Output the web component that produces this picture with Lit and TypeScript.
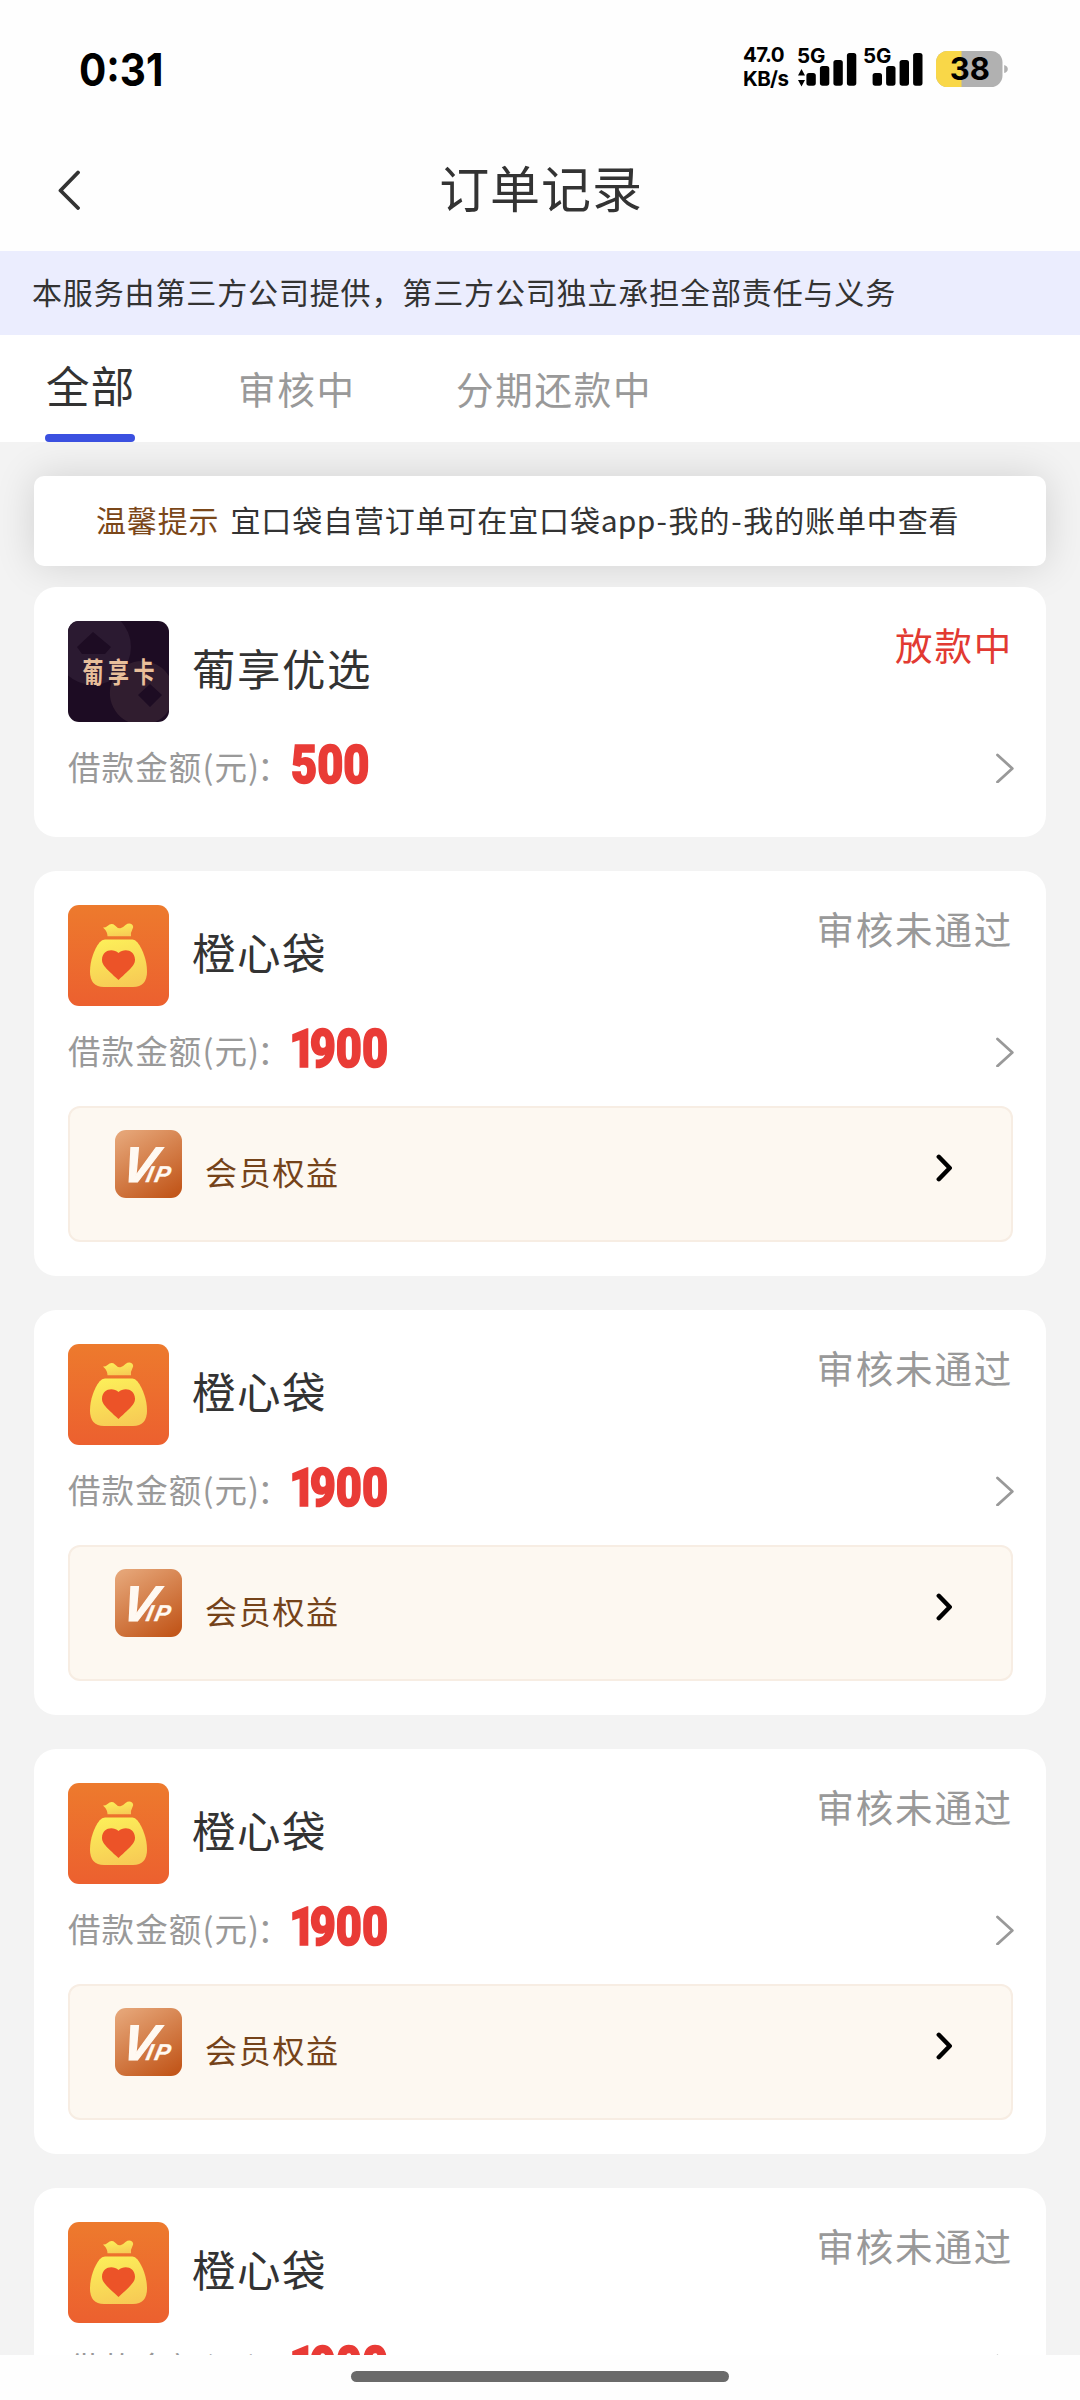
import { LitElement, html, svg, css, nothing } from "lit";
import { customElement, property } from "lit/decorators.js";

interface Order {
  brand: "grape" | "bag";
  name: string;
  amount: string;
  status: string;
  active: boolean;
  vip: boolean;
}

const rejected: Order = {
  brand: "bag",
  name: "橙心袋",
  amount: "1900",
  status: "审核未通过",
  active: false,
  vip: true,
};

const orders: Order[] = [
  { brand: "grape", name: "葡享优选", amount: "500", status: "放款中", active: true, vip: false },
  rejected,
  rejected,
  rejected,
  rejected,
];

@customElement("brand-logo")
export class BrandLogo extends LitElement {
  @property() brand: Order["brand"] = "bag";

  static styles = css`
    :host { display: block; width: 101px; height: 101px; border-radius: 11px; overflow: hidden; }
    svg { display: block; }
    .word { font: 700 21px "Noto Sans CJK SC", sans-serif; fill: #e8bf9b; }
  `;

  private grape() {
    return svg`
      <rect width="101" height="101" fill="#1d0c23"/>
      <path fill="#2b1a31" fill-rule="evenodd" d="M25-12a38 38 0 1 1 0 76a38 38 0 1 1 0-76zM25 11L9 26l5 7h23l6-7z"/>
      <path fill="#301d2f" fill-rule="evenodd" d="M85 42a32 32 0 1 0 0 60a32 32 0 0 0 0-60zM82 63L70 74l12 12l12-12z"/>
      <text class="word" transform="translate(14.5 62) scale(1 1.35)" x="0 25.5 51">葡享卡</text>`;
  }

  private bag() {
    return svg`
      <defs>
        <linearGradient id="bg" x1="0" y1="0" x2="0" y2="1">
          <stop offset="0" stop-color="#ed7a2d"/><stop offset="1" stop-color="#ec602f"/>
        </linearGradient>
        <linearGradient id="gold" x1="0.3" y1="0" x2="0.6" y2="1">
          <stop offset="0" stop-color="#fcee59"/><stop offset="1" stop-color="#f7cb55"/>
        </linearGradient>
      </defs>
      <rect width="101" height="101" fill="url(#bg)"/>
      <path fill="url(#gold)" d="M35 22.500Q37 23 39.500 21Q43.500 17.500 47 20.500Q50 24 53 23Q55 22.500 57.500 20Q61 17.500 64 19.500Q66 21.500 64.500 24Q62.500 27.500 63 31.300H39.500Q39.500 26.500 35 22.500z"/>
      <path fill="url(#gold)" d="M37 34.500H64.500Q67 34.500 69.500 37.500C75 44.500 79 56 79 66.500Q79 82 65 82H36Q22 82 22 66.500C22 56 26 44.500 31.500 37.500Q34 34.500 37 34.500z"/>
      <path fill="#ec5328" d="M50.500 48C45 43 34.500 44.500 34 54.500C34 60 37.500 63 50.500 75C63.500 63 67 60 67 54.500C66.500 44.500 56 43 50.500 48z"/>`;
  }

  render() {
    return html`<svg width="101" height="101" viewBox="0 0 101 101">
      ${this.brand === "grape" ? this.grape() : this.bag()}
    </svg>`;
  }
}

@customElement("order-card")
export class OrderCard extends LitElement {
  @property({ attribute: false }) order!: Order;

  static styles = css`
    :host { display: block; flex: none; }
    .card {
      box-sizing: border-box; display: flex; flex-direction: column;
      height: 250px; padding: 34px 33px 34px 34px; border-radius: 22px; background: #fff;
    }
    .card.tall { height: 405px; }
    .head { display: flex; height: 101px; }
    .name {
      flex: 1; padding: 23px 0 0 23px; line-height: 48px;
      font-size: 43.500px; letter-spacing: 1.500px; color: #333;
    }
    .status { line-height: 44px; padding-top: 1px; font-size: 37.500px; letter-spacing: 1.800px; color: #999; }
    .status.active { color: #e23a32; }
    .money { display: flex; align-items: center; height: 48px; margin-top: 18px; margin-bottom: 1px; }
    .label { width: 223px; font-size: 32.500px; letter-spacing: 1.100px; line-height: 48px; padding-top: 3px; color: #999; white-space: nowrap; }
    .colon { margin-left: -3px; }
    .amount {
      flex: 1; padding-top: 2px; font: 900 54px/48px Roboto, sans-serif; color: #e93b36;
      -webkit-text-stroke: 1.600px #e93b36;
      transform: scaleX(0.835); transform-origin: 0 50%;
    }
    .lead { margin-right: -7px; margin-left: -2px; }
    .go { width: 18px; height: 30px; margin: 7px -1px 0 0; }
    .vip {
      box-sizing: border-box; display: flex; align-items: flex-start;
      height: 136px; margin-top: 33px; padding: 22px 59px 0 45px;
      border: 2px solid #f7ede3; border-radius: 12px; background: #fdf8f1;
    }
    .badge { width: 67px; height: 68px; }
    .mark { font: italic 700 50px "Liberation Sans", sans-serif; fill: #fff9f2; stroke: #fff9f2; stroke-width: 1.200px; }
    .small { font-size: 23px; stroke-width: 0.300px; }
    .perk { flex: 1; padding: 19px 0 0 23px; font-size: 32px; line-height: 44px; letter-spacing: 1.700px; color: #75431a; }
    .more { width: 16px; height: 28px; margin-top: 24px; }
  `;

  private vipBar() {
    return html`<div class="vip">
      <svg class="badge" viewBox="0 0 67 68">
        <defs>
          <linearGradient id="copper" x1="0.2" y1="0" x2="0.8" y2="1">
            <stop offset="0" stop-color="#e5a476"/><stop offset="1" stop-color="#c2571b"/>
          </linearGradient>
        </defs>
        <rect width="67" height="68" rx="11" fill="url(#copper)"/>
        <text class="mark" transform="translate(4.500 51.500) skewX(-12)" x="0" y="0">V<tspan class="small" x="25.500 34">IP</tspan></text>
      </svg>
      <div class="perk">会员权益</div>
      <svg class="more" viewBox="0 0 16 28" fill="none" stroke="#000" stroke-width="4.500" stroke-linecap="round" stroke-linejoin="round">
        <path d="M2.800 2.800L13.700 14L2.800 25.200"/>
      </svg>
    </div>`;
  }

  private amount(value: string) {
    return value.startsWith("1") ? html`<span class="lead">1</span>${value.slice(1)}` : value;
  }

  render() {
    const o = this.order;
    return html`<div class="card ${o.vip ? "tall" : ""}">
      <div class="head">
        <brand-logo .brand=${o.brand}></brand-logo>
        <div class="name">${o.name}</div>
        <div class="status ${o.active ? "active" : ""}">${o.status}</div>
      </div>
      <div class="money">
        <div class="label">借款金额(元)<span class="colon">：</span></div>
        <div class="amount">${this.amount(o.amount)}</div>
        <svg class="go" viewBox="0 0 18 30" fill="none" stroke="#999" stroke-width="2.800" stroke-linecap="round" stroke-linejoin="round">
          <path d="M1.500 2L16.300 15.500L1.500 29"/>
        </svg>
      </div>
      ${o.vip ? this.vipBar() : nothing}
    </div>`;
  }
}

@customElement("app-root")
export class AppRoot extends LitElement {
  static styles = css`
    :host {
      display: flex; flex-direction: column; width: 1080px; height: 2400px; overflow: hidden;
      background: #fefefe; color: #333;
      font-family: "Noto Sans CJK SC", "Noto Sans", sans-serif;
    }
    .statusbar { flex: none; box-sizing: border-box; display: flex; height: 128px; padding: 0 72px 0 79px; }
    .time { flex: 1; padding-top: 43px; font: 650 45px/54px Inter, sans-serif; color: #000; }
    .clock { display: inline-block; transform: scaleX(0.9); transform-origin: 0 50%; }
    .speed { width: 54px; padding-top: 43px; font: 700 20.500px/24px Inter, sans-serif; letter-spacing: -0.600px; color: #000; }
    .signals { width: 139px; height: 128px; }
    .g { font: 650 20.500px Inter, sans-serif; fill: #000; }
    .battery { width: 72px; height: 128px; }
    .level { font: 700 31px Inter, sans-serif; fill: #000; }
    .titlebar { flex: none; display: flex; align-items: center; height: 123px; padding: 0 58px; }
    .back { width: 22px; height: 40px; }
    .title { flex: 1; margin-right: 20px; text-align: center; font-size: 50px; letter-spacing: 0.900px; line-height: 60px; padding-bottom: 7px; }
    .notice { flex: none; height: 84px; padding-left: 32px; background: #ebedfe; font-size: 30px; letter-spacing: 0.860px; line-height: 81px; color: #333; white-space: nowrap; }
    .tabs { flex: none; display: flex; height: 107px; background: #fff; padding-left: 45px; position: relative; z-index: 1; }
    .tab { font-size: 37.500px; letter-spacing: 1.800px; color: #999; line-height: 106px; }
    .tab.second { margin: 0 100px 0 103px; }
    .tab.on { box-sizing: border-box; width: 90px; padding-left: 1px; font-size: 43.500px; letter-spacing: 1.300px; line-height: 99px; color: #333; display: flex; flex-direction: column; white-space: nowrap; }
    .line { height: 8px; margin-left: -1px; border-radius: 4px; background: #3b50e0; }
    .list {
      flex: none; box-sizing: border-box; height: 1913px; padding: 34px 34px 0; overflow: hidden;
      display: flex; flex-direction: column; gap: 34px; background: #f3f3f3;
    }
    .tip {
      flex: none; box-sizing: border-box; height: 90px; margin-bottom: -13px; padding-left: 62px; border-radius: 10px;
      background: #fff; box-shadow: 0 0 40px rgba(0, 0, 0, 0.14);
      font-size: 30px; letter-spacing: 0.860px; line-height: 87px; white-space: nowrap;
    }
    .warm { color: #7b4719; margin-right: 11px; }
    .dash { margin: 0 0.900px; }
    .app { letter-spacing: 0.200px; }
    order-card { position: relative; }
    .foot { flex: 1; display: flex; justify-content: center; padding-top: 16px; }
    .home { width: 378px; height: 11px; border-radius: 6px; background: #6a6a6a; }
  `;

  private bars(x: number) {
    return [0, 1, 2, 3].map((i) => {
      const top = [73, 66, 60, 53][i];
      return svg`<rect x=${x + i * 13.5} y=${top} width="9.400" height=${85.7 - top} rx="2.600"/>`;
    });
  }

  render() {
    return html`
      <div class="statusbar">
        <div class="time"><span class="clock">0:31</span></div>
        <div class="speed"><div>47.0</div><div>KB/s</div></div>
        <svg class="signals" viewBox="0 0 139 128">
          <text class="g" x="0" y="63.200">5G</text>
          <path d="M4.500 69L8 75.500H1zM4.500 86.500L8 80H1z"/>
          ${this.bars(9.4)}
          <text class="g" x="66" y="63.200">5G</text>
          ${this.bars(75.6)}
        </svg>
        <svg class="battery" viewBox="936 0 72 128">
          <defs><clipPath id="cell"><rect x="936" y="51" width="66.500" height="36" rx="11.500"/></clipPath></defs>
          <g clip-path="url(#cell)">
            <rect x="936" y="51" width="67" height="36" fill="#b1b1b1"/>
            <rect x="936" y="51" width="25.500" height="36" fill="#f9d748"/>
          </g>
          <path d="M1004.200 65q3.600 1 3.600 4t-3.600 4z" fill="#b1b1b1"/>
          <text class="level" x="969.800" y="80" text-anchor="middle">38</text>
        </svg>
      </div>
      <div class="titlebar">
        <svg class="back" viewBox="0 0 22 40" fill="none" stroke="#333" stroke-width="3.800" stroke-linecap="round" stroke-linejoin="round">
          <path d="M20 2.500L2.500 20.500L20 38"/>
        </svg>
        <div class="title">订单记录</div>
      </div>
      <div class="notice">本服务由第三方公司提供，第三方公司独立承担全部责任与义务</div>
      <div class="tabs">
        <div class="tab on">全部<div class="line"></div></div>
        <div class="tab second">审核中</div>
        <div class="tab">分期还款中</div>
      </div>
      <div class="list">
        <div class="tip"><span class="warm">温馨提示</span>宜口袋自营订单可在宜口袋<span class="app">app</span><span class="dash">-</span>我的<span class="dash">-</span>我的账单中查看</div>
        ${orders.map((o) => html`<order-card .order=${o}></order-card>`)}
      </div>
      <div class="foot"><div class="home"></div></div>
    `;
  }
}
